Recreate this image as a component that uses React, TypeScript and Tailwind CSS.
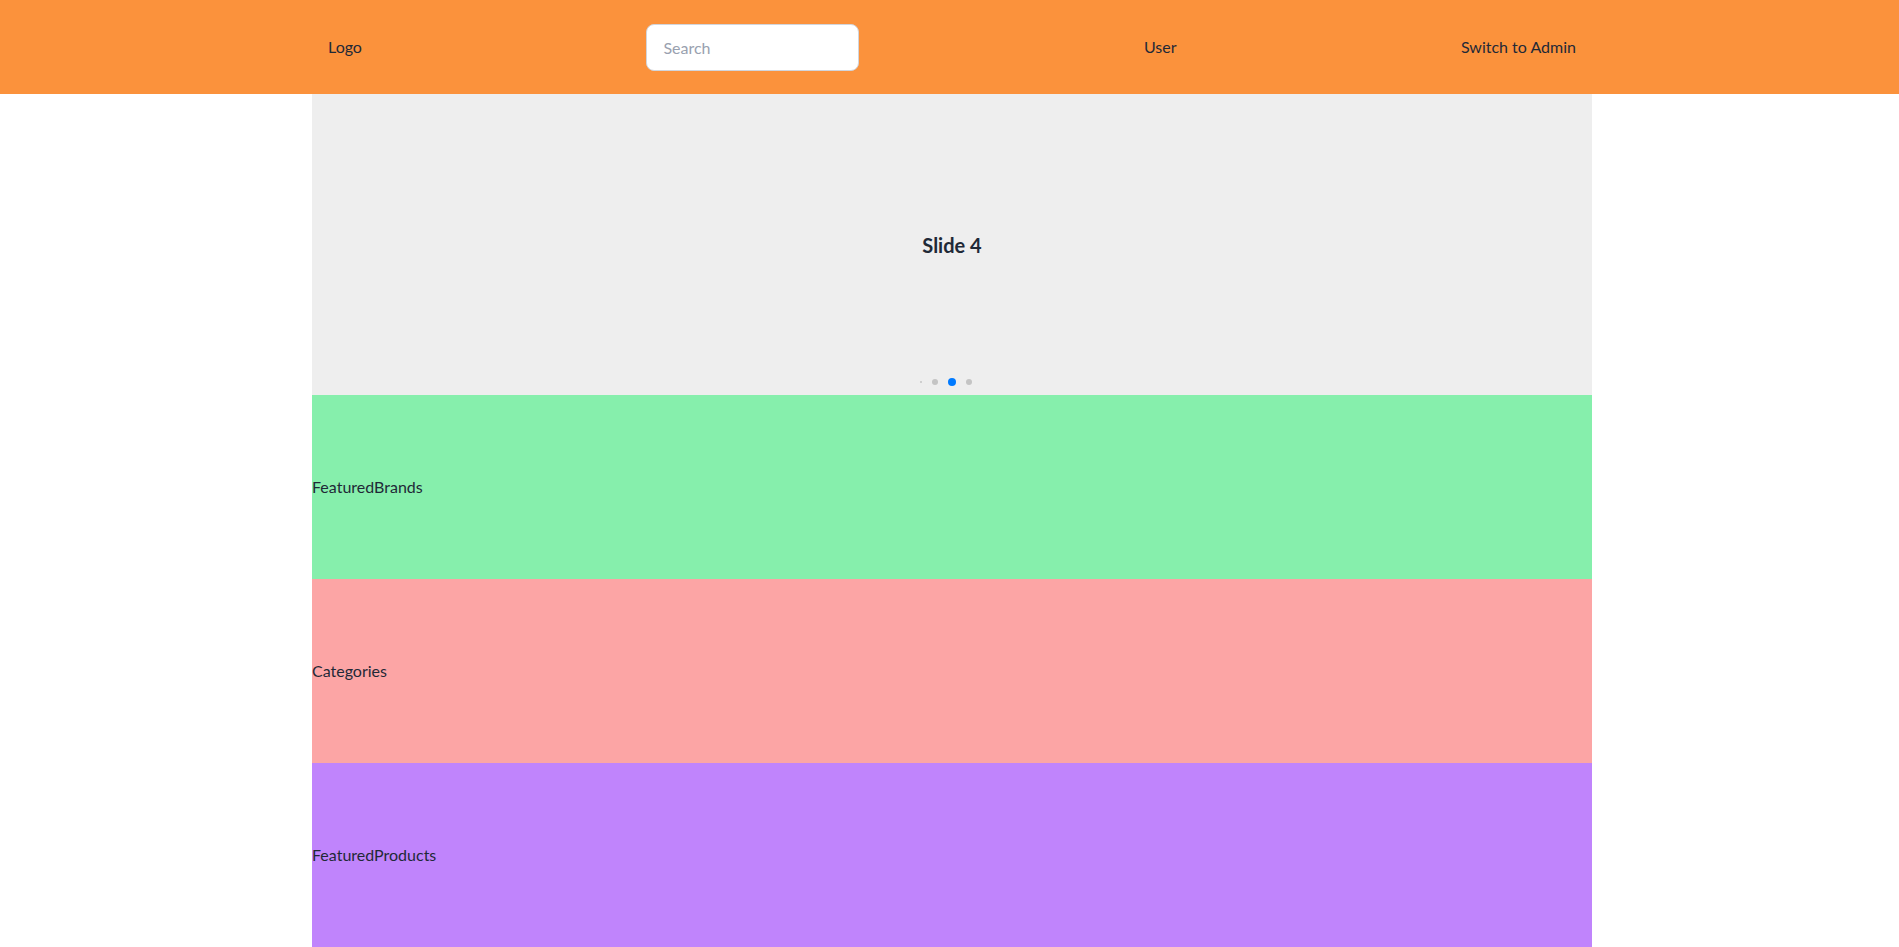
const sections = [
  { name: 'FeaturedBrands', bg: 'bg-[#86efac]' },
  { name: 'Categories', bg: 'bg-[#fca5a5]' },
  { name: 'FeaturedProducts', bg: 'bg-[#c084fc]' },
];

const App = () => {
  return (
    <div className="min-h-screen bg-white text-[#1f2937] font-['Segoe_UI','Lato','Noto_Sans',sans-serif]">
      <header className="bg-[#fb923c] h-[94px] pl-[5px]">
        <div className="w-[1280px] mx-auto h-full px-4 flex items-center justify-between text-base">
          <div>Logo</div>
          <input
            type="text"
            placeholder="Search"
            className="w-[213px] h-[47px] px-4 rounded-lg bg-white border border-gray-300 placeholder-gray-400 focus:outline-none"
          />
          <div>User</div>
          <div>Switch to Admin</div>
        </div>
      </header>

      <div className="pl-[5px]">
        <main className="w-[1280px] mx-auto">
          <div className="relative h-[301px] bg-[#eeeeee] flex items-center justify-center">
            <h2 className="text-xl font-bold">Slide 4</h2>
            <div className="absolute bottom-[9px] left-0 right-0 pr-[12px] flex items-center justify-center gap-[10px]">
              <span className="w-[2px] h-[2px] rounded-full bg-[#c4c4c4]" />
              <span className="w-[6px] h-[6px] rounded-full bg-[#c4c4c4]" />
              <span className="w-[8px] h-[8px] rounded-full bg-[#007aff]" />
              <span className="w-[6px] h-[6px] rounded-full bg-[#c4c4c4]" />
            </div>
          </div>

          {sections.map((s) => (
            <section key={s.name} className={`${s.bg} h-[184px] flex items-center`}>
              {s.name}
            </section>
          ))}
        </main>
      </div>
    </div>
  );
};

export default App;
